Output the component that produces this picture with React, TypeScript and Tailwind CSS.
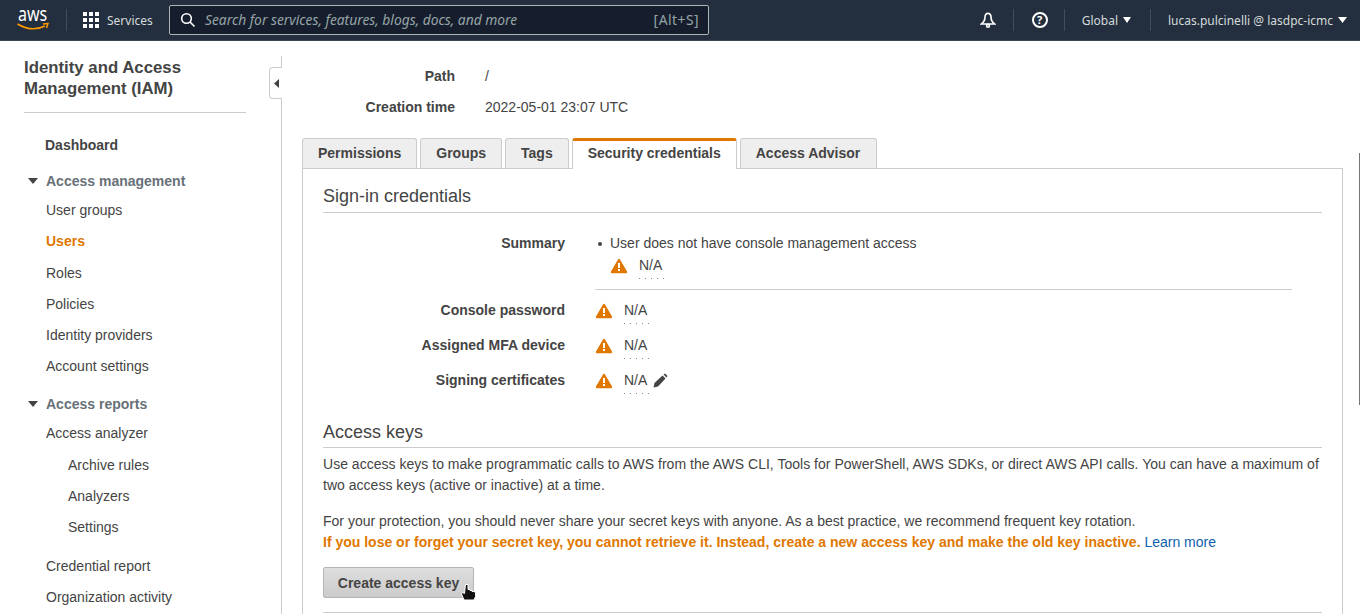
import { ReactNode } from "react";

const SANS = "font-['Liberation_Sans',Arial,sans-serif]";

const Caret = ({ className = "", w = 10 }: { className?: string; w?: number }) => (
    <svg width={w} height="6" viewBox="0 0 10 6" preserveAspectRatio="none" className={className}>
        <path d="M0 0h10L5 6z" fill="currentColor" />
    </svg>
);

const Warning = () => (
    <svg width="18" height="16" viewBox="0 0 18 16" className="shrink-0 mt-[2px]">
        <path
            d="M9 2 L16 14 H2 Z"
            fill="#e07700"
            stroke="#e07700"
            strokeWidth="2.4"
            strokeLinejoin="round"
        />
        <rect x="8" y="5" width="2" height="5" fill="#fff" />
        <rect x="8" y="11" width="2" height="2" fill="#fff" />
    </svg>
);

const Pencil = () => (
    <svg width="15" height="15" viewBox="0 0 15 15" className="ml-[6px] mt-[2px] shrink-0">
        <path d="M0.5 14.5 L1.5 10 L9.5 2.5 L12.5 5.5 L5 13.5 Z" fill="#444" />
        <path d="M10.5 1.5 L12 0.5 L14.5 3 L13.5 4.5 Z" fill="#444" />
    </svg>
);

const NA = ({ children }: { children?: ReactNode }) => (
    <div className="flex items-start">
        <span className="inline-block h-[19px] leading-[19px] relative">
            N/A
            <span className="absolute left-0 w-[25px] top-[22px] h-px bg-[repeating-linear-gradient(to_right,#888_0,#888_1px,transparent_1px,transparent_6px)]" />
        </span>
        {children}
    </div>
);

const SideItem = ({ label, active }: { label: string; active?: boolean }) => (
    <div className={`h-[31.2px] leading-[31px] pl-[46px] ${active ? "text-[#e07700] font-bold" : ""}`}>
        {label}
    </div>
);

const SubItem = ({ label }: { label: string }) => (
    <div className="h-[31px] leading-[31px] pl-[68px]">{label}</div>
);

const SideGroup = ({ label }: { label: string }) => (
    <div className="flex items-center h-[22px] pl-[28px] text-[#687078] font-bold">
        <Caret className="text-[#444] mr-[8px]" />
        {label}
    </div>
);

const Tab = ({ label, active, className = "" }: { label: string; active?: boolean; className?: string }) => (
    <div
        className={
            active
                ? "h-[31px] px-[15px] flex items-center bg-white border border-[#ccc] border-b-0 border-t-[3px] border-t-[#e07700] rounded-t-[3px] font-bold relative top-px pb-[3px]"
                : `h-[30px] px-[15px] flex items-center bg-[#eee] border border-[#ccc] border-b-0 rounded-t-[3px] font-bold ${className}`
        }
    >
        {label}
    </div>
);

const Row = ({ label, children }: { label: string; children: ReactNode }) => (
    <div className="flex h-[35px]">
        <div className="w-[242px] text-right font-bold leading-[19px]">{label}</div>
        <div className="ml-[30px] flex items-start gap-[11px]">
            <Warning />
            {children}
        </div>
    </div>
);

export default function App() {
    return (
        <div className={`h-[614px] w-[1360px] overflow-hidden bg-white text-[14px] text-[#444] relative ${SANS}`}>
            {/* Top nav */}
            <header className="h-[41px] bg-[#232f3e] border-b border-[#3b4654] flex items-center text-[#d5dbdb] font-['Noto_Sans',sans-serif] text-[12px]">
                <div className="w-[66px] pl-[17px] flex items-center">
                    <svg width="42" height="22" viewBox="0 0 42 22">
                        <text
                            x="1"
                            y="9.4"
                            transform="scale(1 1.25)"
                            fill="#fff"
                            fontSize="16"
                            fontFamily="'Noto Sans',sans-serif"
                        >
                            aws
                        </text>
                        <path d="M0.5 15 Q15 23.5 28 17" fill="none" stroke="#f90" strokeWidth="1.6" />
                        <path d="M26 15 L31 14.5 L29.5 19" fill="none" stroke="#f90" strokeWidth="1.4" />
                    </svg>
                </div>
                <div className="w-px h-[22px] bg-[#414d5c]" />
                <div className="ml-[16px] grid grid-cols-3 gap-[2px]">
                    {Array.from({ length: 9 }).map((_, i) => (
                        <div key={i} className="w-[4px] h-[4px] bg-white" />
                    ))}
                </div>
                <span className="ml-[8px] w-[62px] pt-[1px]">Services</span>
                <div className="w-[540px] h-[30px] bg-[#161e2d] border border-[#aab7b8] rounded-[2px] flex items-center pl-[10px] pr-[9px]">
                    <svg width="16" height="16" viewBox="0 0 16 16" fill="none" stroke="#fff" strokeWidth="1.6">
                        <circle cx="6.5" cy="6.5" r="4.8" />
                        <path d="M10 10 L14.5 14.5" />
                    </svg>
                    <span className="ml-[9px] text-[13.8px] italic text-[#95a5a6] flex-1">
                        Search for services, features, blogs, docs, and more
                    </span>
                    <span className="text-[13.8px] tracking-[0.5px] text-[#95a5a6]">[Alt+S]</span>
                </div>
                <div className="ml-auto flex items-center h-[22px]">
                    <svg width="16" height="16" viewBox="0 0 18 18" fill="none" stroke="#fff" strokeWidth="1.8">
                        <path d="M9 1.5 C6 1.5 5.5 4 5.5 7 C5.5 10 4 11.5 1.5 13.5 H16.5 C14 11.5 12.5 10 12.5 7 C12.5 4 12 1.5 9 1.5 Z" />
                        <circle cx="9" cy="15.5" r="1.6" />
                    </svg>
                    <div className="ml-[17px] w-px h-[22px] bg-[#414d5c]" />
                    <div className="ml-[18px] w-[16px] h-[16px] rounded-full border-2 border-white flex items-center justify-center text-white text-[11px] font-bold">
                        ?
                    </div>
                    <div className="ml-[16px] w-px h-[22px] bg-[#414d5c]" />
                    <span className="ml-[17px] pt-[1px]">Global</span>
                    <Caret w={8} className="ml-[5px] text-white" />
                    <div className="ml-[19px] w-px h-[22px] bg-[#414d5c]" />
                    <span className="ml-[17px] pt-[1px]">lucas.pulcinelli @ lasdpc-icmc</span>
                    <Caret w={9} className="ml-[5px] mr-[13px] text-white" />
                </div>
            </header>

            <div className="flex">
                {/* Sidebar */}
                <aside className="w-[282px] shrink-0 relative h-[573px]">
                    <div className="absolute right-0 top-[15px] bottom-0 w-px bg-[#ccc]" />
                    <div className="absolute right-0 top-[26px] w-[13px] h-[32px] bg-white border border-r-0 border-[#ccc] rounded-l-[4px] flex items-center justify-center">
                        <svg width="5" height="9" viewBox="0 0 5 9">
                            <path d="M5 0v9L0 4.5z" fill="#444" />
                        </svg>
                    </div>
                    <div className="pt-[16px]">
                        <div className="mx-[24px] w-[222px] text-[16.8px] leading-[21px] font-bold pb-[13px] border-b border-[#ccc]">
                            Identity and Access Management (IAM)
                        </div>
                        <div className="pl-[45px] mt-[21px] font-bold leading-[22px]">Dashboard</div>
                        <div className="mt-[14px]">
                            <SideGroup label="Access management" />
                            <div className="mt-[3.3px]">
                                <SideItem label="User groups" />
                                <SideItem label="Users" active />
                                <SideItem label="Roles" />
                                <SideItem label="Policies" />
                                <SideItem label="Identity providers" />
                                <SideItem label="Account settings" />
                            </div>
                        </div>
                        <div className="mt-[10.7px]">
                            <SideGroup label="Access reports" />
                            <div className="mt-[3px]">
                                <SideItem label="Access analyzer" />
                                <div className="mt-[1px]">
                                    <SubItem label="Archive rules" />
                                    <SubItem label="Analyzers" />
                                    <SubItem label="Settings" />
                                </div>
                                <div className="mt-[8px]">
                                    <SideItem label="Credential report" />
                                    <div className="-mt-[0.6px]">
                                        <SideItem label="Organization activity" />
                                    </div>
                                </div>
                            </div>
                        </div>
                    </div>
                </aside>

                {/* Content */}
                <main className="pl-[20px] w-[1078px] shrink-0">
                    <div className="pt-[25px] flex h-[31px] box-content">
                        <div className="w-[153px] text-right font-bold leading-[21px]">Path</div>
                        <div className="ml-[30px] leading-[21px]">/</div>
                    </div>
                    <div className="flex h-[31px]">
                        <div className="w-[153px] text-right font-bold leading-[21px]">Creation time</div>
                        <div className="ml-[30px] leading-[21px]">2022-05-01 23:07 UTC</div>
                    </div>

                    <div className="mt-[10px] flex items-end gap-[3px] h-[30px] relative z-10">
                        <Tab label="Permissions" />
                        <Tab label="Groups" />
                        <Tab label="Tags" />
                        <Tab label="Security credentials" active />
                        <Tab label="Access Advisor" className="pr-[16px]" />
                    </div>
                    <div className="w-[1041px] h-[500px] border border-[#ccc] px-[20px]">
                        <h2 className="mt-[16px] text-[18px] leading-[23px] pb-[4px] border-b border-[#ccc]">
                            Sign-in credentials
                        </h2>
                        <div className="mt-[21px] flex">
                            <div className="w-[242px] text-right font-bold leading-[19px]">Summary</div>
                            <div className="ml-[30px] w-[697px] pb-[14px] border-b border-[#ccc]">
                                <div className="leading-[19px] flex">
                                    <span className="w-[15px] pl-[3px] pt-[8px]">
                                        <span className="block w-[4px] h-[4px] rounded-full bg-[#444]" />
                                    </span>
                                    User does not have console management access
                                </div>
                                <div className="mt-[3px] ml-[15px] flex items-start gap-[11px]">
                                    <Warning />
                                    <NA />
                                </div>
                            </div>
                        </div>
                        <div className="mt-[11px]">
                            <Row label="Console password">
                                <NA />
                            </Row>
                            <Row label="Assigned MFA device">
                                <NA />
                            </Row>
                            <Row label="Signing certificates">
                                <NA>
                                    <Pencil />
                                </NA>
                            </Row>
                        </div>
                        <h2 className="mt-[15px] text-[18px] leading-[23px] pb-[3px] border-b border-[#ccc]">
                            Access keys
                        </h2>
                        <p className="mt-[6px] leading-[21px] tracking-[0.02px]">
                            Use access keys to make programmatic calls to AWS from the AWS CLI, Tools for PowerShell,
                            AWS SDKs, or direct AWS API calls. You can have a maximum of two access keys (active or
                            inactive) at a time.
                        </p>
                        <p className="mt-[15px] leading-[21px]">
                            For your protection, you should never share your secret keys with anyone. As a best
                            practice, we recommend frequent key rotation.
                            <br />
                            <span className="font-bold text-[#e07700]">
                                If you lose or forget your secret key, you cannot retrieve it. Instead, create a new
                                access key and make the old key inactive.
                            </span>{" "}
                            <span className="text-[#0f62ad]">Learn more</span>
                        </p>
                        <button className="mt-[14px] pt-[1px] h-[31px] w-[151px] rounded-[2px] border border-[#b5b5b5] bg-gradient-to-b from-[#dedede] to-[#cbcbcb] font-bold text-[#444] relative">
                            Create access key
                            <svg width="17" height="17" viewBox="0 0 17 17" className="absolute left-[137px] top-[16px]">
                                <path
                                    d="M4.5 .5 h2.5 v5 h2 v1 h2 v1 h2 l1.5 1 v4 l-1.5 3.5 H3 L.5 10 l1-1.5 L3.5 9.5 Z"
                                    fill="#111"
                                    stroke="#fff"
                                    strokeWidth="1"
                                />
                            </svg>
                        </button>
                        <div className="mt-[14px] border-t border-[#ccc]" />
                    </div>
                </main>
            </div>
            <div className="absolute right-0 top-[153px] w-px h-[252px] bg-[#777]" />
        </div>
    );
}
